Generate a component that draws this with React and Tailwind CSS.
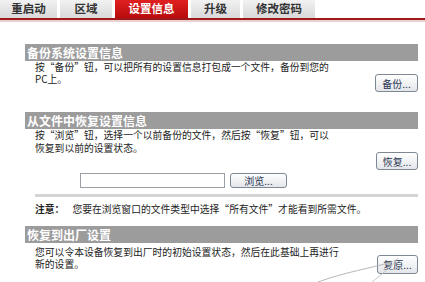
import React from "react";

const font = { fontFamily: '"Noto Sans CJK SC", "Noto Sans", sans-serif' };

function Tab({ label, w, active }) {
  return (
    <div
      className={
        "flex h-[18px] items-center justify-center text-[11.5px] font-bold " +
        (active
          ? "bg-gradient-to-b from-[#e02020] to-[#b80c0c] text-white"
          : "bg-gradient-to-b from-[#f2f2f2] to-[#d9d9d9] text-[#333]")
      }
      style={{ width: w }}
    >
      {label}
    </div>
  );
}

function Btn({ children, className = "" }) {
  return (
    <div
      className={
        "flex items-center justify-center rounded-[3px] border border-[#7d8894] bg-gradient-to-b from-white to-[#e3e6ea] text-[10px] text-[#2a3550] " +
        className
      }
    >
      {children}
    </div>
  );
}

function Header({ children }) {
  return (
    <div className="flex h-[17px] items-center bg-[#9c9c9c] pl-[2px] text-[12px] font-bold leading-none text-white">
      {children}
    </div>
  );
}

export default function App() {
  return (
    <div
      className="relative h-[282px] w-[425px] overflow-hidden bg-white text-[#222]"
      style={font}
    >
      <div className="flex gap-[3px]">
        <Tab label="重启动" w={57} />
        <Tab label="区域" w={52} />
        <Tab label="设置信息" w={73} active />
        <Tab label="升级" w={49} />
        <Tab label="修改密码" w={72} />
      </div>
      <div className="h-[2px] bg-[#9e1a1a]" />
      <div className="h-[2px] bg-[#ecd0d0]" />

      <div className="pl-[25px] pr-[7px]">
        {/* Section 1 */}
        <div className="mt-[22px]">
          <Header>备份系统设置信息</Header>
          <div className="flex justify-between">
            <p className="pl-[10px] text-[9.8px] leading-[12px]">
              按“备份”钮，可以把所有的设置信息打包成一个文件，备份到您的
              <br />
              PC上。
            </p>
            <Btn className="mt-[13px] h-[18px] w-[43px]">备份...</Btn>
          </div>
        </div>

        {/* Section 2 */}
        <div className="mt-[20px]">
          <Header>从文件中恢复设置信息</Header>
          <div className="flex justify-between">
            <p className="pl-[10px] pt-[0px] text-[9.8px] leading-[12.5px]">
              按“浏览”钮，选择一个以前备份的文件，然后按“恢复”钮，可以
              <br />
              恢复到以前的设置状态。
            </p>
            <Btn className="mt-[23px] h-[18px] w-[42px]">恢复...</Btn>
          </div>
          <div className="mt-[3px] ml-[55px] flex items-center gap-[5px]">
            <div className="h-[15px] w-[145px] border border-[#9aa0a6] bg-white" />
            <Btn className="h-[15px] w-[57px] text-[10.5px]">浏览...</Btn>
          </div>
          <div className="ml-[10px] mt-[6px] h-[3px] bg-[#d4d4d4]" />
          <p className="mt-[6px] pl-[10px] text-[9.8px] leading-[12px]">
            <span className="font-bold">注意：</span>
            <span className="ml-[8px]">
              您要在浏览窗口的文件类型中选择“所有文件”才能看到所需文件。
            </span>
          </p>
        </div>

        {/* Section 3 */}
        <div className="mt-[11px]">
          <Header>恢复到出厂设置</Header>
          <div className="flex justify-between">
            <p className="pl-[10px] pt-[3px] text-[9.8px] leading-[12px]">
              您可以令本设备恢复到出厂时的初始设置状态，然后在此基础上再进行
              <br />
              新的设置。
            </p>
            <Btn className="mt-[12px] h-[19px] w-[41px]">复原...</Btn>
          </div>
        </div>
      </div>

      <svg
        className="pointer-events-none absolute left-0 top-0"
        width="425"
        height="282"
      >
        <path
          d="M318 282 C345 272 372 268 392 262"
          stroke="#b8b8b8"
          strokeWidth="1"
          fill="none"
        />
        <path
          d="M372 282 C382 274 390 268 398 258"
          stroke="#c4c4c4"
          strokeWidth="1"
          fill="none"
        />
      </svg>
    </div>
  );
}
